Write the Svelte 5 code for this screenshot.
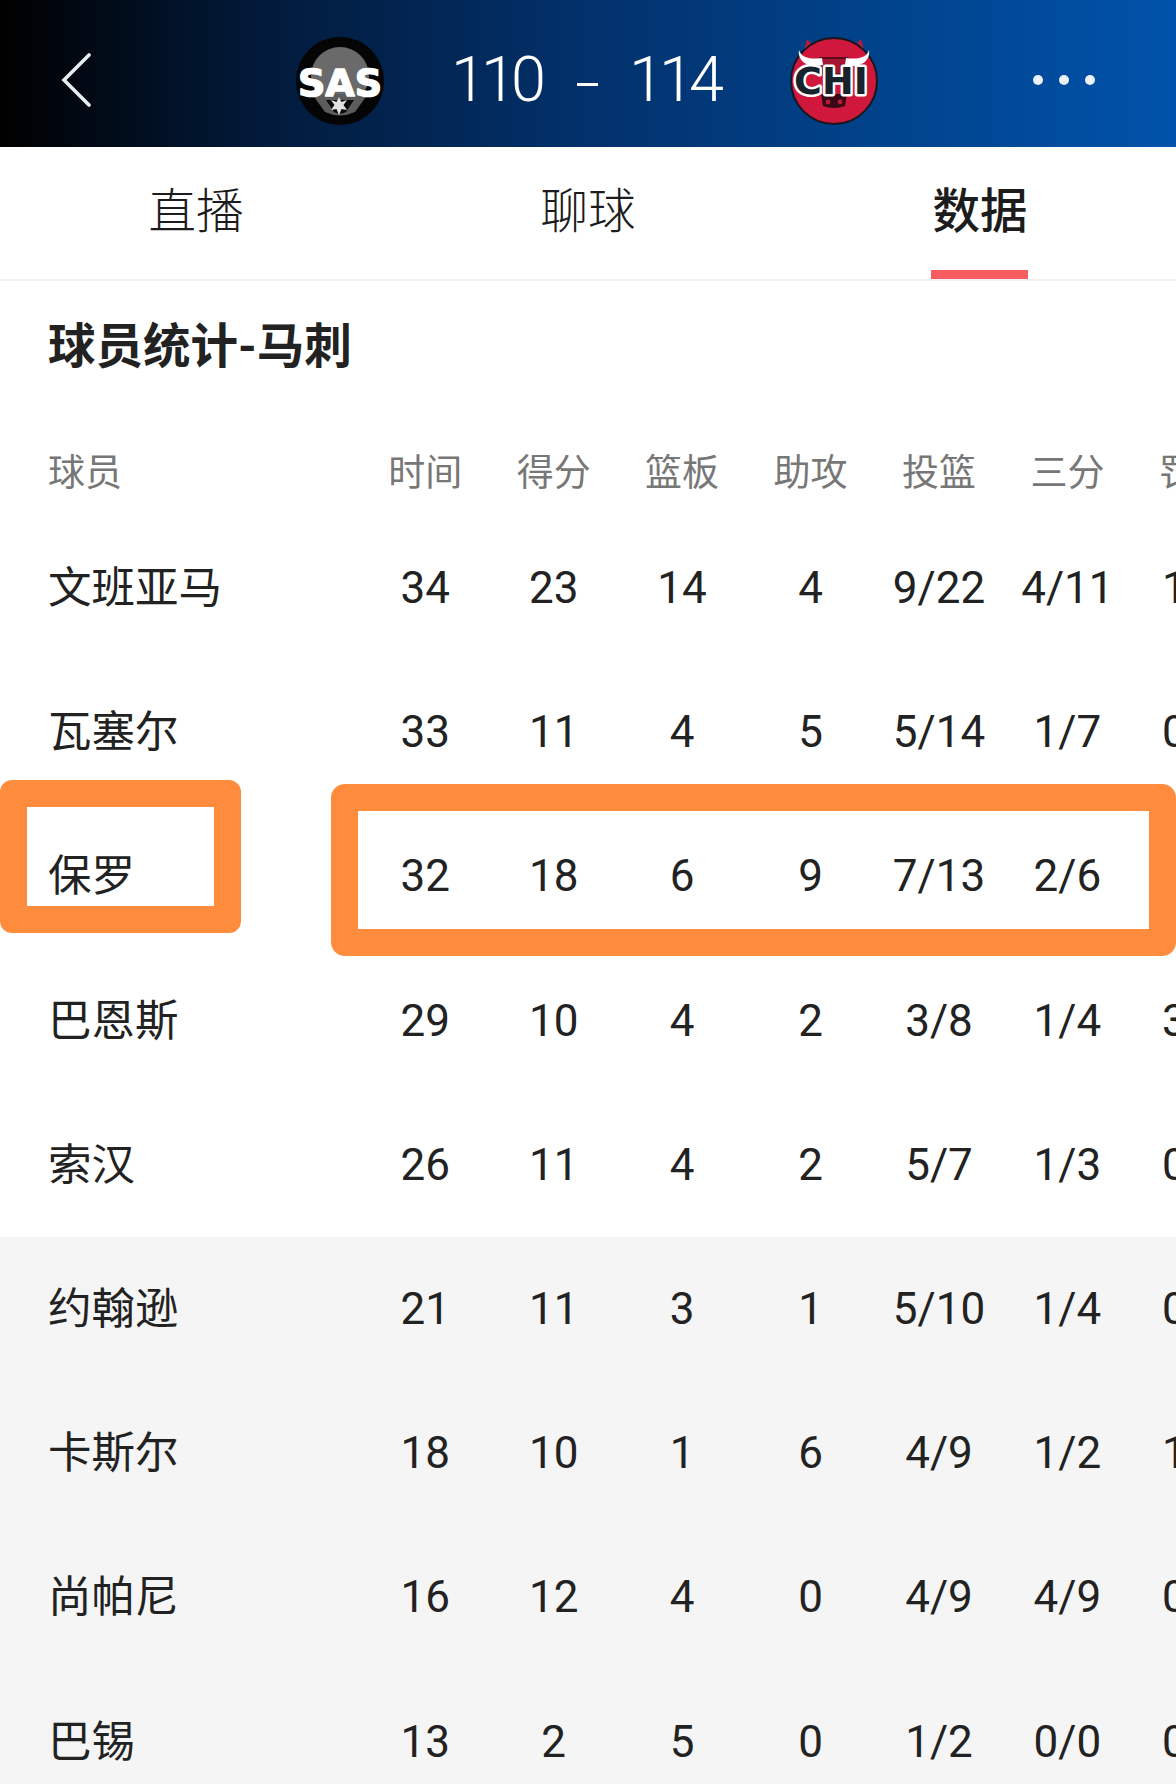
<script>
  const columns = ['时间', '得分', '篮板', '助攻', '投篮', '三分', '罚球'];
  const players = [
    { name: '文班亚马', stats: ['34', '23', '14', '4', '9/22', '4/11', '1/1'] },
    { name: '瓦塞尔', stats: ['33', '11', '4', '5', '5/14', '1/7', '0/0'] },
    { name: '保罗', stats: ['32', '18', '6', '9', '7/13', '2/6', '0/0'] },
    { name: '巴恩斯', stats: ['29', '10', '4', '2', '3/8', '1/4', '3/4'] },
    { name: '索汉', stats: ['26', '11', '4', '2', '5/7', '1/3', '0/0'] },
    { name: '约翰逊', stats: ['21', '11', '3', '1', '5/10', '1/4', '0/0'], bench: true },
    { name: '卡斯尔', stats: ['18', '10', '1', '6', '4/9', '1/2', '1/2'], bench: true },
    { name: '尚帕尼', stats: ['16', '12', '4', '0', '4/9', '4/9', '0/0'], bench: true },
    { name: '巴锡', stats: ['13', '2', '5', '0', '1/2', '0/0', '0/0'], bench: true }
  ];
</script>

<div class="page">
  <header class="hero">
    <svg class="back" viewBox="0 0 30 54" aria-hidden="true">
      <path d="M28 2 L3 27 L28 52" fill="none" stroke="#e9edf2" stroke-width="3.6" stroke-linecap="round" stroke-linejoin="miter" />
    </svg>
    <svg class="logo sas" viewBox="0 0 90 92" aria-hidden="true">
      <ellipse cx="45" cy="47" rx="44" ry="44" fill="#050505" />
      <circle cx="45" cy="42" r="29" fill="#6a6a6a" />
      <path d="M17 60 H73 L60 78 Q45 85 30 78 Z" fill="#5c5c5c" />
      <path d="M31 66 L39 78 Q45 81 51 78 L59 66 Z" fill="#0a0a0a" />
      <text class="sas-text" x="45" y="62">SAS</text>
      <path d="M44 63 L46.5 68 L52 66 L48.5 71 L52 76 L46.5 75 L44 81 L41.5 75 L36 76 L39.5 71 L36 66 L41.5 68 Z" fill="#e2e2e2" />
    </svg>
    <div class="score">
      <span class="num home">110</span>
      <span class="dash"></span>
      <span class="num away">114</span>
    </div>
    <svg class="logo chi" viewBox="0 0 90 92" aria-hidden="true">
      <path d="M13 24 L18 5 L29 17 Z M77 24 L72 5 L61 17 Z" fill="#b91b3a" />
      <circle cx="45" cy="47" r="43" fill="#d0173c" stroke="#16161c" stroke-width="2" />
      <path d="M31 24 H59 L56 40 H34 Z" fill="#a31530" stroke="#3c0a14" stroke-width="1.5" />
      <path d="M10 16 C12 23 20 26 33 24 L34 31 C21 35 8 28 10 16 Z" fill="#fff" />
      <path d="M80 16 C78 23 70 26 57 24 L56 31 C69 35 82 28 80 16 Z" fill="#fff" />
      <path d="M32 60 H58 L56 72 Q45 76 34 72 Z" fill="#3a0a14" />
      <circle cx="39" cy="68" r="2.4" fill="#b91b3a" />
      <circle cx="51" cy="68" r="2.4" fill="#b91b3a" />
      <text class="chi-text" x="42" y="60">CHI</text>
    </svg>
    <div class="dots"><i></i><i></i><i></i></div>
  </header>

  <nav class="tabs">
    <div class="tab">直播</div>
    <div class="tab">聊球</div>
    <div class="tab active">数据<span class="bar"></span></div>
  </nav>

  <h1 class="title">球员统计-马刺</h1>

  <section class="table">
    <div class="row head">
      <div class="name">球员</div>
      {#each columns as col}
        <div class="cell">{col}</div>
      {/each}
    </div>
    {#each players as p}
      <div class="row body" class:bench={p.bench}>
        <div class="name">{p.name}</div>
        {#each p.stats as s}
          <div class="cell">{s}</div>
        {/each}
      </div>
    {/each}
  </section>
  <div class="mark mark-name"></div>
  <div class="mark mark-stats"></div>
</div>

<style>
  :global(body) {
    margin: 0;
    background: #fff;
  }
  .page {
    width: 1176px;
    height: 1784px;
    overflow: hidden;
    position: relative;
    background: #fff;
    color: #222;
    font-family: Roboto, "Noto Sans CJK SC", sans-serif;
  }
  .hero {
    height: 147px;
    box-sizing: border-box;
    padding-top: 12px;
    position: relative;
    display: flex;
    align-items: center;
    background: linear-gradient(90deg, #000 0%, #021a3a 22%, #02316c 50%, #014188 72%, #0052aa 100%);
    color: #fff;
  }
  .back {
    width: 30px;
    height: 54px;
    margin-left: 61px;
    flex: none;
  }
  .logo {
    width: 90px;
    height: 92px;
    flex: none;
  }
  .sas {
    margin-left: 204px;
  }
  .chi {
    margin-left: 66px;
  }
  .sas-text,
  .chi-text {
    font-family: "DejaVu Sans", sans-serif;
    font-weight: 700;
    text-anchor: middle;
    paint-order: stroke;
    stroke-linejoin: round;
  }
  .sas-text {
    font-size: 38px;
    fill: #fff;
    stroke: #fff;
    stroke-width: 1.5px;
  }
  .chi-text {
    font-size: 38px;
    fill: #16222c;
    stroke: #fff;
    stroke-width: 5px;
  }
  .score {
    display: flex;
    align-items: center;
    margin-left: 66px;
    width: 272px;
    font-weight: 300;
    font-size: 63px;
    line-height: 1;
    letter-spacing: -5px;
  }
  .num {
    width: 93px;
  }
  .dash {
    width: 21px;
    height: 3px;
    margin: 10px 31px 0 33px;
    background: #fff;
  }
  .dots {
    display: flex;
    gap: 16px;
    position: absolute;
    left: 1033px;
    top: 75px;
  }
  .dots i {
    width: 10px;
    height: 10px;
    border-radius: 50%;
    background: #eef3f9;
  }
  .tabs {
    display: grid;
    grid-template-columns: repeat(3, 1fr);
    height: 132px;
    border-bottom: 2px solid #f2f2f2;
  }
  .tab {
    position: relative;
    display: flex;
    align-items: center;
    justify-content: center;
    font-size: 47.5px;
    font-weight: 300;
    color: #1c1c1c;
    padding-bottom: 11px;
    box-sizing: border-box;
  }
  .tab.active {
    font-weight: 500;
  }
  .bar {
    position: absolute;
    left: 147px;
    bottom: 0;
    width: 97px;
    height: 9px;
    background: #f65c60;
  }
  .title {
    margin: 0;
    padding: 35px 48px 0;
    font-size: 47.5px;
    line-height: 62px;
    font-weight: 700;
    color: #222;
    height: 62px;
  }
  .table {
    position: relative;
    margin-top: 65px;
  }
  .row {
    display: grid;
    grid-template-columns: 361px repeat(7, 128.45px);
    align-items: center;
    width: 1300px;
  }
  .row.head {
    height: 54px;
    margin-bottom: 19px;
    font-size: 37px;
    color: #777;
  }
  .row.body {
    height: 144.2px;
    font-size: 44px;
  }
  .row.body .name {
    font-size: 43.5px;
    padding-bottom: 7px;
  }
  .row.bench {
    background: #f5f5f5;
  }
  .name {
    padding-left: 48px;
  }
  .cell {
    text-align: center;
    white-space: nowrap;
  }
  .mark {
    position: absolute;
    box-sizing: border-box;
    border: 27px solid #ff8c3c;
  }
  .mark-name {
    left: 0;
    top: 780px;
    width: 241px;
    height: 153px;
    border-radius: 12px;
  }
  .mark-stats {
    left: 331px;
    top: 784px;
    width: 845px;
    height: 172px;
    border-radius: 14px;
  }
</style>
